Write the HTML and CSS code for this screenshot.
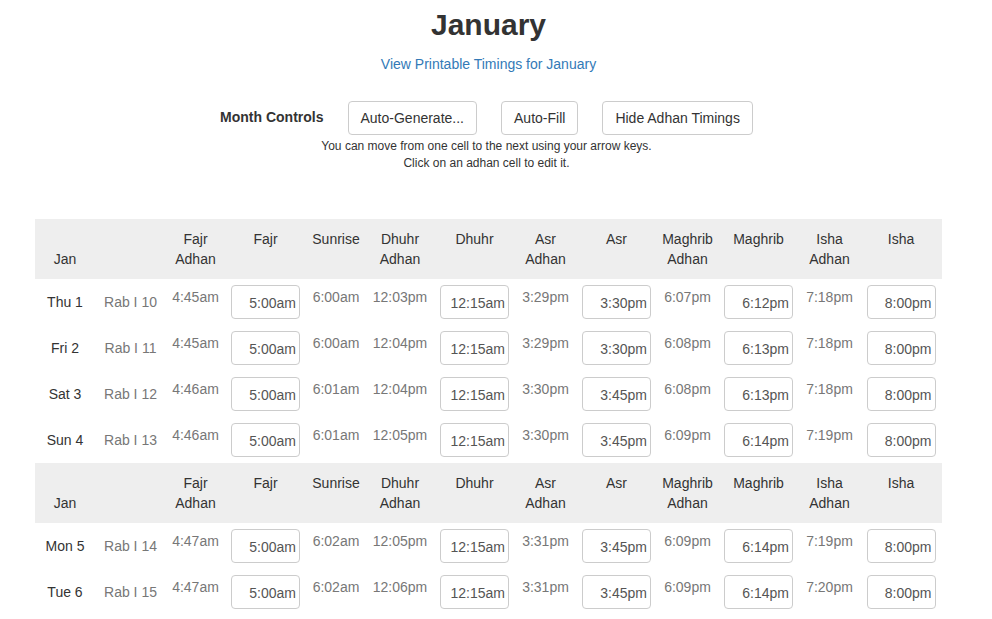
FILE: index.html
```html
<!DOCTYPE html>
<html>
<head>
    <link rel="stylesheet" href="styles.css">
</head>
<body>
    <div class="page">
        <h1 class="month-title">January</h1>
        <p class="print-link"><a href="#">View Printable Timings for January</a></p>

        <div class="controls">
            <span class="controls-label">Month Controls</span>
            <button class="btn">Auto-Generate...</button>
            <button class="btn">Auto-Fill</button>
            <button class="btn">Hide Adhan Timings</button>
        </div>
        <p class="help">You can move from one cell to the next using your arrow keys.<br>Click on an adhan cell to edit it.</p>

        <table class="timings">
            <colgroup>
                <col style="width:60px"><col style="width:71px"><col style="width:59px"><col style="width:81px">
                <col style="width:60px"><col style="width:68px"><col style="width:81px"><col style="width:61px">
                <col style="width:81px"><col style="width:61px"><col style="width:81px"><col style="width:61px">
                <col style="width:82px">
            </colgroup>
            <tbody id="rows"></tbody>
        </table>
    </div>

    <script>
        const days = [
            ['Thu 1', 'Rab I 10', '4:45am', '5:00am', '6:00am', '12:03pm', '12:15am', '3:29pm', '3:30pm', '6:07pm', '6:12pm', '7:18pm', '8:00pm'],
            ['Fri 2', 'Rab I 11', '4:45am', '5:00am', '6:00am', '12:04pm', '12:15am', '3:29pm', '3:30pm', '6:08pm', '6:13pm', '7:18pm', '8:00pm'],
            ['Sat 3', 'Rab I 12', '4:46am', '5:00am', '6:01am', '12:04pm', '12:15am', '3:30pm', '3:45pm', '6:08pm', '6:13pm', '7:18pm', '8:00pm'],
            ['Sun 4', 'Rab I 13', '4:46am', '5:00am', '6:01am', '12:05pm', '12:15am', '3:30pm', '3:45pm', '6:09pm', '6:14pm', '7:19pm', '8:00pm'],
            ['Mon 5', 'Rab I 14', '4:47am', '5:00am', '6:02am', '12:05pm', '12:15am', '3:31pm', '3:45pm', '6:09pm', '6:14pm', '7:19pm', '8:00pm'],
            ['Tue 6', 'Rab I 15', '4:47am', '5:00am', '6:02am', '12:06pm', '12:15am', '3:31pm', '3:45pm', '6:09pm', '6:14pm', '7:20pm', '8:00pm']
        ];

        const headerRow = `
            <tr class="head">
                <th class="month">Jan</th><th></th>
                <th>Fajr<br>Adhan</th><th>Fajr</th><th>Sunrise</th>
                <th>Dhuhr<br>Adhan</th><th>Dhuhr</th>
                <th>Asr<br>Adhan</th><th>Asr</th>
                <th>Maghrib<br>Adhan</th><th>Maghrib</th>
                <th>Isha<br>Adhan</th><th>Isha</th>
            </tr>`;

        // editable columns: 3, 6, 8, 10, 12
        const editable = [3, 6, 8, 10, 12];

        let html = '';
        days.forEach((d, idx) => {
            if (idx % 4 === 0) html += headerRow;
            html += '<tr>';
            d.forEach((v, c) => {
                if (c === 0) html += `<td class="day">${v}</td>`;
                else if (c === 1) html += `<td class="hijri">${v}</td>`;
                else if (editable.includes(c)) html += `<td class="edit"><input type="text" value="${v}"></td>`;
                else html += `<td class="adhan">${v}</td>`;
            });
            html += '</tr>';
        });
        document.getElementById('rows').innerHTML = html;
    </script>
</body>
</html>
```

FILE: styles.css
```css
body {
    margin: 0;
    font-family: "Liberation Sans", Arial, sans-serif;
    font-size: 14px;
    line-height: 20px;
    color: #333;
    background: #fff;
}
.page {
    width: 907px;
    margin-left: 35px;
}
.month-title {
    margin: 6px 0 0;
    font-size: 30px;
    line-height: 38px;
    font-weight: bold;
    text-align: center;
}
.print-link {
    margin: 10px 0 0;
    text-align: center;
}
.print-link a {
    color: #337ab7;
    text-decoration: none;
}
.controls {
    display: flex;
    justify-content: center;
    align-items: center;
    gap: 24px;
    margin-top: 27px;
    padding-right: 4px;
}
.controls-label {
    font-weight: bold;
    margin-top: -2px;
}
.btn {
    height: 34px;
    padding: 6px 12px;
    font-family: inherit;
    font-size: 14px;
    line-height: 20px;
    color: #333;
    background: #fff;
    border: 1px solid #ccc;
    border-radius: 4px;
}
.help {
    margin: 3px 0 0;
    font-size: 12px;
    line-height: 17px;
    text-align: center;
    padding-right: 4px;
}
.timings {
    margin-top: 47px;
    width: 907px;
    table-layout: fixed;
    border-collapse: collapse;
}
.timings th {
    background: #eee;
    font-weight: normal;
    text-align: center;
    vertical-align: top;
    padding: 10px 0;
    line-height: 20px;
}
.timings th.month {
    vertical-align: bottom;
}
.timings td {
    padding: 6px;
    text-align: center;
    vertical-align: middle;
}
.timings td.hijri {
    color: #777;
}
.timings td.adhan {
    color: #777;
    vertical-align: top;
    padding-top: 8px;
    padding-left: 0;
    padding-right: 0;
}
.timings input {
    display: block;
    box-sizing: border-box;
    width: 69px;
    height: 34px;
    margin: 0 auto;
    padding: 6px 3px 4px;
    font-family: inherit;
    font-size: 14px;
    color: #555;
    text-align: right;
    border: 1px solid #ccc;
    border-radius: 4px;
}
```
